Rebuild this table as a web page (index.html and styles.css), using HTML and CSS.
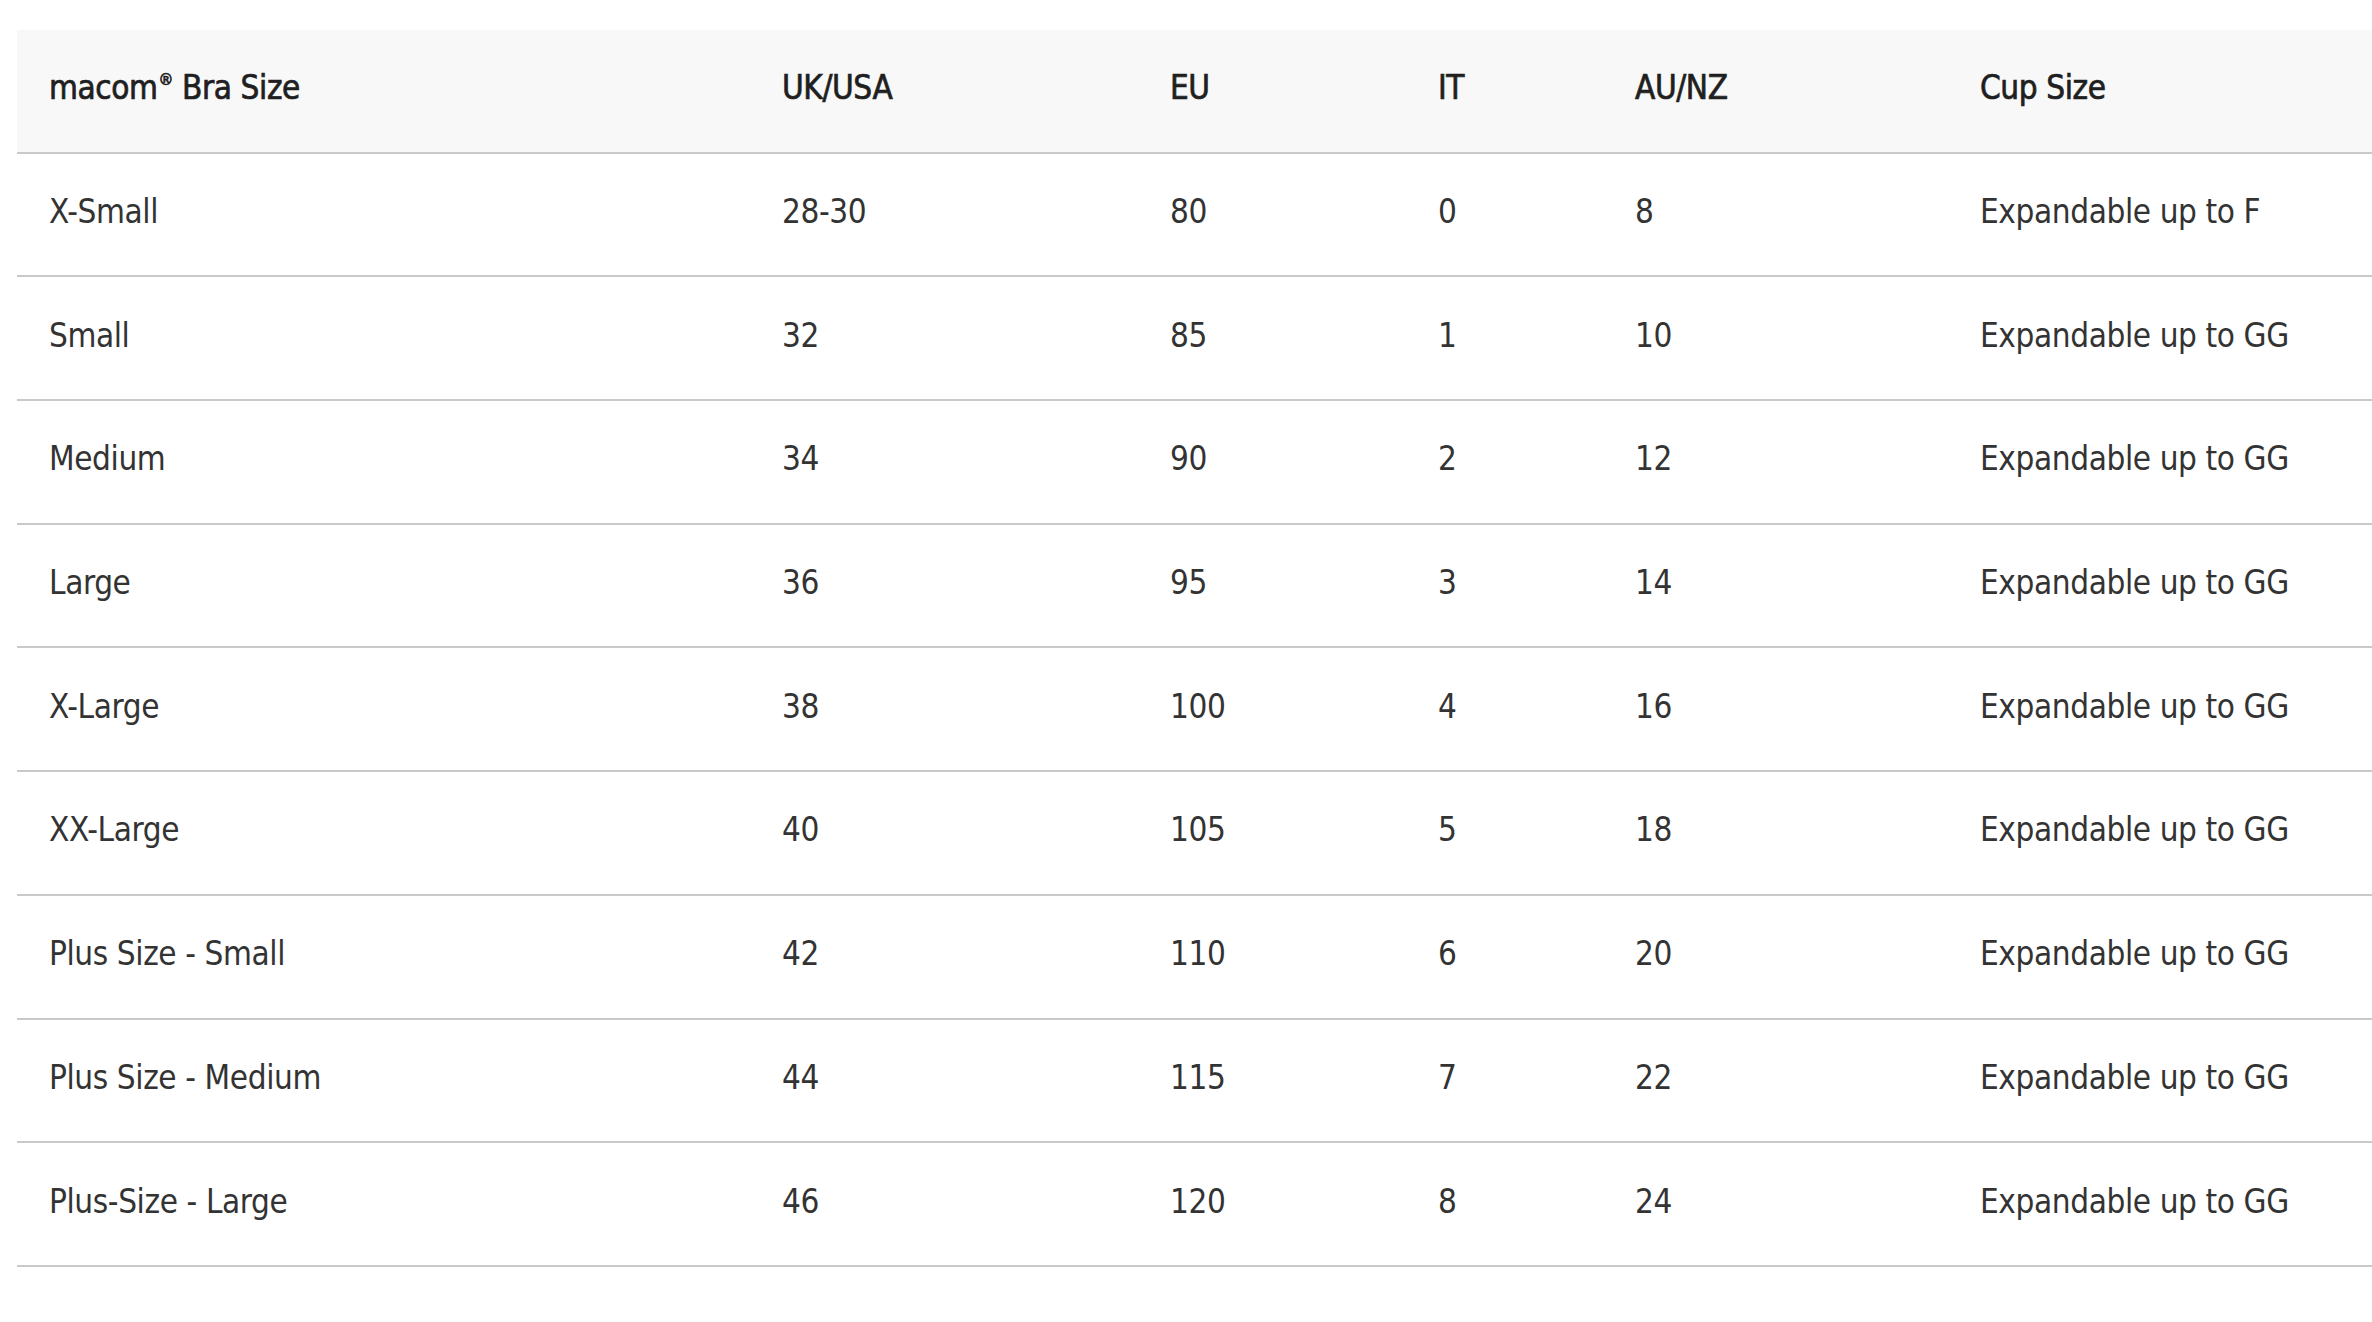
FILE: index.html
```html
<!DOCTYPE html>
<html lang="en">
<head>
<meta charset="utf-8">
<title>macom Bra Size Chart</title>
<link rel="stylesheet" href="styles.css">
</head>
<body>
<div class="wrap">
  <table class="size-table">
    <colgroup>
      <col class="c1"><col class="c2"><col class="c3"><col class="c4"><col class="c5"><col class="c6">
    </colgroup>
    <thead>
      <tr>
        <th>macom<sup>®</sup> Bra Size</th>
        <th>UK/USA</th>
        <th>EU</th>
        <th>IT</th>
        <th>AU/NZ</th>
        <th>Cup Size</th>
      </tr>
    </thead>
    <tbody>
      <tr><td>X-Small</td><td>28-30</td><td>80</td><td>0</td><td>8</td><td>Expandable up to F</td></tr>
      <tr><td>Small</td><td>32</td><td>85</td><td>1</td><td>10</td><td>Expandable up to GG</td></tr>
      <tr><td>Medium</td><td>34</td><td>90</td><td>2</td><td>12</td><td>Expandable up to GG</td></tr>
      <tr><td>Large</td><td>36</td><td>95</td><td>3</td><td>14</td><td>Expandable up to GG</td></tr>
      <tr><td>X-Large</td><td>38</td><td>100</td><td>4</td><td>16</td><td>Expandable up to GG</td></tr>
      <tr><td>XX-Large</td><td>40</td><td>105</td><td>5</td><td>18</td><td>Expandable up to GG</td></tr>
      <tr><td>Plus Size - Small</td><td>42</td><td>110</td><td>6</td><td>20</td><td>Expandable up to GG</td></tr>
      <tr><td>Plus Size - Medium</td><td>44</td><td>115</td><td>7</td><td>22</td><td>Expandable up to GG</td></tr>
      <tr><td>Plus-Size - Large</td><td>46</td><td>120</td><td>8</td><td>24</td><td>Expandable up to GG</td></tr>
    </tbody>
  </table>
</div>
</body>
</html>
```

FILE: styles.css
```css
html, body {
  margin: 0;
  padding: 0;
  background: #ffffff;
  overflow: hidden;
}

.wrap {
  padding: 30px 0 0 17px;
}

.size-table {
  width: 2355px;
  border-collapse: collapse;
  table-layout: fixed;
  font-family: "DejaVu Sans Condensed", "DejaVu Sans", sans-serif;
  font-stretch: condensed;
  font-size: 33px;
  letter-spacing: -0.4px;
  color: #333333;
}

.c1 { width: 733px; }
.c2 { width: 388px; }
.c3 { width: 268px; }
.c4 { width: 197px; }
.c5 { width: 345px; }
.c6 { width: 424px; }

.size-table th,
.size-table td {
  text-align: left;
  padding: 0 32px 6px;
  height: 115.7px;
  vertical-align: middle;
  border-bottom: 2px solid #c9c9c9;
  white-space: nowrap;
}

.size-table thead th {
  background: #f8f8f8;
  font-weight: 400;
  color: #1f1f1f;
  -webkit-text-stroke: 0.7px #1f1f1f;
}

.size-table sup {
  font-size: 0.5em;
  vertical-align: 0.9em;
  margin-left: 1px;
}
```
